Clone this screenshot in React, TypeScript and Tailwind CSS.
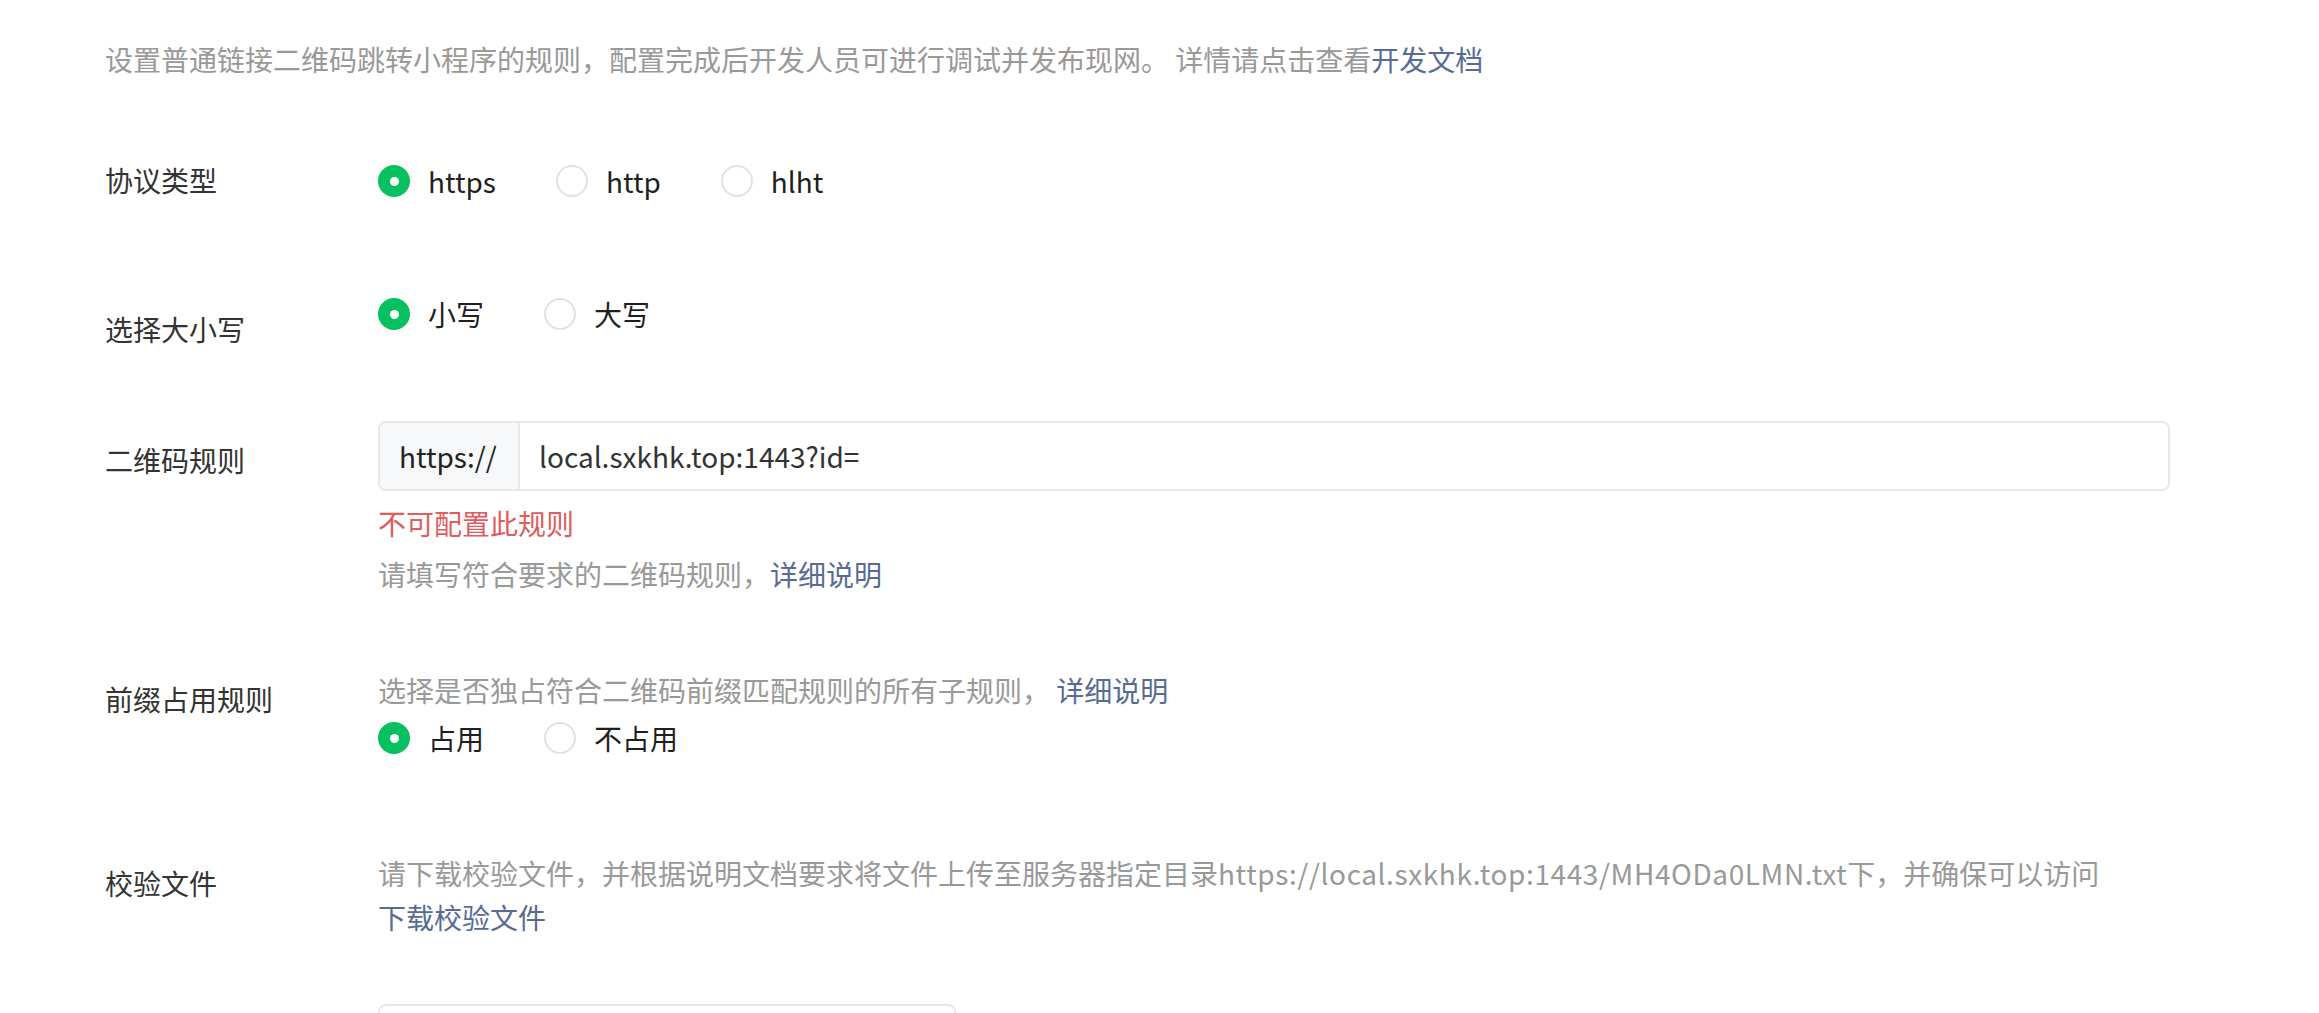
import React from "react";

const FONT = "font-['Noto_Sans_CJK_SC','Noto_Sans',sans-serif]";

function Radio({ checked, label, last }: { checked?: boolean; label: string; last?: boolean }) {
  return (
    <div className={`flex items-center ${last ? "" : "mr-[60px]"}`}>
      {checked ? (
        <span className="flex h-[32px] w-[32px] items-center justify-center rounded-full bg-[#07c160]">
          <span className="h-[9px] w-[9px] rounded-full bg-white" />
        </span>
      ) : (
        <span className="h-[32px] w-[32px] rounded-full border-2 border-[#e2e2e2] bg-white" />
      )}
      <span className="ml-[18px] text-[#1f1f1f]">{label}</span>
    </div>
  );
}

export default function App() {
  return (
    <div className={`${FONT} h-[1013px] overflow-hidden bg-white pl-[105px] pt-[39px] text-[28px] leading-[40px]`}>
      <div className="text-[#999999]">
        设置普通链接二维码跳转小程序的规则，配置完成后开发人员可进行调试并发布现网。 详情请点击查看
        <span className="text-[#576b95]">开发文档</span>
      </div>

      {/* 协议类型 */}
      <div className="mt-[81px] flex items-start">
        <div className="w-[273px] shrink-0 text-[#333333]">协议类型</div>
        <div className="flex pt-[1px]">
          <Radio checked label="https" />
          <Radio label="http" />
          <Radio label="hlht" last />
        </div>
      </div>

      {/* 选择大小写 */}
      <div className="mt-[93px] flex items-start">
        <div className="mt-[15px] w-[273px] shrink-0 text-[#333333]">选择大小写</div>
        <div className="flex">
          <Radio checked label="小写" />
          <Radio label="大写" last />
        </div>
      </div>

      {/* 二维码规则 */}
      <div className="mt-[72px] flex items-start">
        <div className="mt-[19px] w-[273px] shrink-0 text-[#333333]">二维码规则</div>
        <div className="flex flex-col">
          <div className="flex h-[70px] w-[1792px] overflow-hidden rounded-[8px] border-2 border-[#e6e8eb] bg-white">
            <div className="flex w-[140px] shrink-0 items-center border-r-2 border-[#e6e8eb] bg-[#f7f8fa] pl-[19px] text-[#222222]">
              https://
            </div>
            <div className="flex items-center pl-[19px] text-[#333333]">local.sxkhk.top:1443?id=</div>
          </div>
          <div className="mt-[12px] text-[#e15b61]">不可配置此规则</div>
          <div className="mt-[11px] text-[#999999]">
            请填写符合要求的二维码规则，<span className="text-[#576b95]">详细说明</span>
          </div>
        </div>
      </div>

      {/* 前缀占用规则 */}
      <div className="mt-[76px] flex items-start">
        <div className="mt-[9px] w-[273px] shrink-0 text-[#333333]">前缀占用规则</div>
        <div className="flex flex-col">
          <div className="text-[#999999]">
            选择是否独占符合二维码前缀匹配规则的所有子规则， <span className="text-[#576b95]">详细说明</span>
          </div>
          <div className="mt-[8px] flex">
            <Radio checked label="占用" />
            <Radio label="不占用" last />
          </div>
        </div>
      </div>

      {/* 校验文件 */}
      <div className="mt-[95px] flex items-start">
        <div className="mt-[10px] w-[273px] shrink-0 text-[#333333]">校验文件</div>
        <div className="flex flex-col">
          <div className="text-[#999999]">
            请下载校验文件，并根据说明文档要求将文件上传至服务器指定目录
            <span className="tracking-[0.6px]">https://local.sxkhk.top:1443/MH4ODa0LMN.txt</span>
            下，并确保可以访问
          </div>
          <div className="mt-[4px] text-[#576b95]">下载校验文件</div>
        </div>
      </div>

      <div className="mt-[67px] flex">
        <div className="w-[273px] shrink-0" />
        <div className="h-[70px] w-[578px] shrink-0 rounded-[8px] border-2 border-[#e6e8eb] bg-white" />
      </div>
    </div>
  );
}
